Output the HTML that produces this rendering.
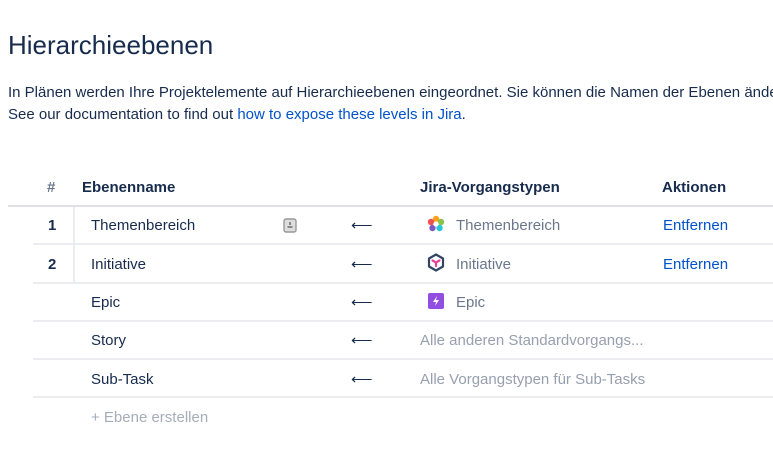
<!DOCTYPE html>
<html><head><meta charset="utf-8"><style>
*{margin:0;padding:0;box-sizing:border-box}
body{width:773px;height:453px;overflow:hidden;background:#fff;font-family:"Liberation Sans",sans-serif;color:#172b4d;position:relative}
.a{position:absolute;white-space:nowrap}
h1{position:absolute;left:8px;top:30px;font-size:26px;font-weight:normal;color:#172b4d}
.p{font-size:15px;color:#172b4d}
.p a{color:#0052cc;text-decoration:none}
.th{font-size:15px;font-weight:bold;top:179px}
.line{position:absolute;height:2px;background:#ebecf0}
.t{font-size:15px}
.g{color:#6b778c}
.lk{color:#0052cc}
.num{font-weight:bold;font-size:15px}
</style></head><body>
<h1>Hierarchieebenen</h1>
<div class="a p" style="left:8px;top:84px">In Plänen werden Ihre Projektelemente auf Hierarchieebenen eingeordnet. Sie können die Namen der Ebenen ändern</div>
<div class="a p" style="left:8px;top:106px">See our documentation to find out <a>how to expose these levels in Jira</a>.</div>

<div class="a th" style="left:47px;color:#6b778c">#</div>
<div class="a th" style="left:82px">Ebenenname</div>
<div class="a th" style="left:420px">Jira-Vorgangstypen</div>
<div class="a th" style="left:662px">Aktionen</div>
<div class="line" style="left:8px;top:205px;width:765px;background:#dfe1e6"></div>

<div style="position:absolute;left:73px;top:207px;width:2px;height:76px;background:#ebecf0"></div>
<div class="line" style="left:33px;top:243px;width:740px"></div>
<div class="line" style="left:33px;top:282px;width:740px"></div>
<div class="line" style="left:33px;top:320px;width:740px"></div>
<div class="line" style="left:33px;top:358px;width:740px"></div>
<div class="line" style="left:33px;top:396px;width:740px"></div>

<div class="a num" style="left:48px;top:217px">1</div>
<div class="a num" style="left:48px;top:256px">2</div>

<div class="a t" style="left:91px;top:217px">Themenbereich</div>
<div class="a t" style="left:91px;top:256px">Initiative</div>
<div class="a t" style="left:91px;top:294px">Epic</div>
<div class="a t" style="left:91px;top:332px">Story</div>
<div class="a t" style="left:91px;top:371px">Sub-Task</div>
<div class="a t" style="left:91px;top:409px;color:#a5adba">+ Ebene erstellen</div>

<svg class="a" style="left:283px;top:218px" width="14" height="15" viewBox="0 0 14 15"><rect x="1" y="1" width="12" height="13" rx="2" fill="#ddd" stroke="#999" stroke-width="1.4"/><rect x="6" y="4" width="2" height="3" fill="#888"/><rect x="4.5" y="8" width="5" height="2" fill="#888"/></svg>

<div class="a t" style="left:351px;top:216px">⟵</div>
<div class="a t" style="left:351px;top:255px">⟵</div>
<div class="a t" style="left:351px;top:293px">⟵</div>
<div class="a t" style="left:351px;top:331px">⟵</div>
<div class="a t" style="left:351px;top:370px">⟵</div>

<svg class="a" style="left:427px;top:215px" width="18" height="18" viewBox="0 0 18 18">
<circle cx="9" cy="4" r="3.2" fill="#ff9f1a"/><circle cx="14" cy="7" r="3.2" fill="#8bc34a"/><circle cx="12.5" cy="13" r="3.2" fill="#26c6da"/><circle cx="5.5" cy="13" r="3.2" fill="#7e57c2"/><circle cx="4" cy="7" r="3.2" fill="#ef5350"/><circle cx="9" cy="9" r="2.6" fill="#fff"/></svg>
<svg class="a" style="left:427px;top:253px" width="18" height="19" viewBox="0 0 18 19"><path d="M9 1.5L16 5.5V13.5L9 17.5L2 13.5V5.5Z" fill="#fff" stroke="#344563" stroke-width="2.2" stroke-linejoin="round"/><path d="M5.5 7.5L9 9.5L12.5 7.5M9 9.5V13" stroke="#e84393" stroke-width="2.2" fill="none" stroke-linecap="round"/></svg>
<svg class="a" style="left:428px;top:293px" width="16" height="16" viewBox="0 0 16 16"><rect width="16" height="16" rx="2" fill="#904ee2"/><path d="M9 3L5 9H8L7 13L11 7H8Z" fill="#fff"/></svg>

<div class="a t g" style="left:456px;top:217px">Themenbereich</div>
<div class="a t g" style="left:456px;top:256px">Initiative</div>
<div class="a t g" style="left:456px;top:294px">Epic</div>
<div class="a t" style="left:420px;top:332px;color:#97a0af">Alle anderen Standardvorgangs...</div>
<div class="a t" style="left:420px;top:371px;color:#97a0af">Alle Vorgangstypen für Sub-Tasks</div>

<div class="a t lk" style="left:663px;top:217px">Entfernen</div>
<div class="a t lk" style="left:663px;top:256px">Entfernen</div>
</body></html>
